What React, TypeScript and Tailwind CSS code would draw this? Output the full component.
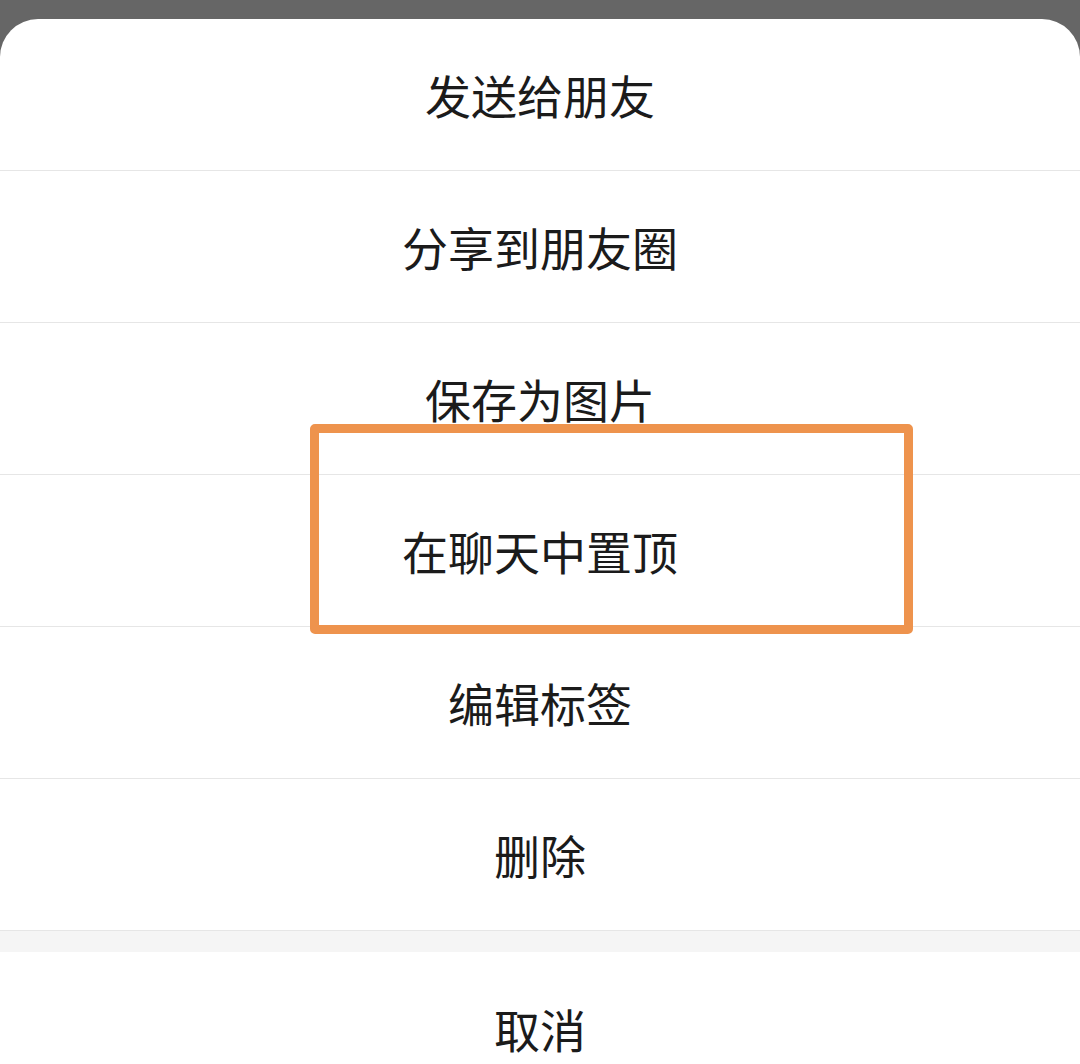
import React from 'react';

const items = ['发送给朋友', '分享到朋友圈', '保存为图片', '在聊天中置顶', '编辑标签', '删除'];

export default function App() {
  return (
    <div
      className="relative h-[1064px] w-[1080px] overflow-hidden bg-[#666666] pt-[19px]"
      style={{ fontFamily: '"Noto Sans CJK SC", "Noto Sans", sans-serif' }}
    >
      <div className="h-full rounded-t-[38px] bg-white">
        {items.map((label) => (
          <div
            key={label}
            className="flex h-[152px] items-center justify-center border-b border-[#e6e6e6] text-[46px] text-[#1b1b1b]"
          >
            {label}
          </div>
        ))}
        <div className="h-[21px] bg-[#f5f5f5]" />
        <div className="flex h-[152px] items-center justify-center text-[46px] text-[#1b1b1b]">
          取消
        </div>
      </div>
      {/* highlight annotation */}
      <div className="absolute left-[310px] top-[424px] h-[210px] w-[603px] rounded-[5px] border-[9px] border-[#ee934d]" />
    </div>
  );
}
